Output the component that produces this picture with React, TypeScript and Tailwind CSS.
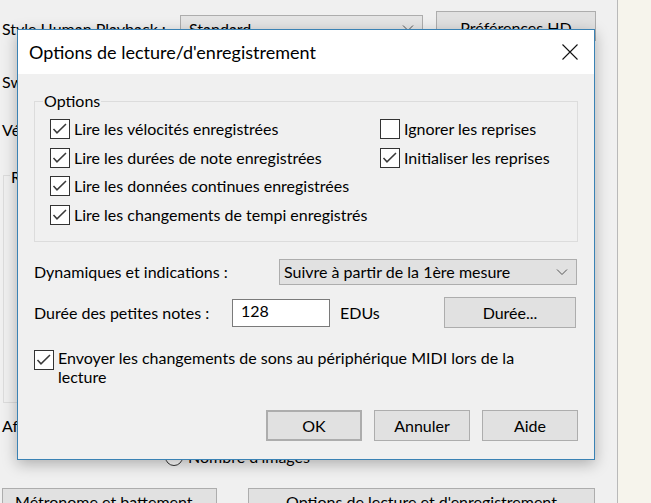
import React from "react";

const font = { fontFamily: "Lato, 'Segoe UI', 'Liberation Sans', sans-serif" };

function Check({ checked }: { checked: boolean }) {
  return (
    <span className="flex h-[20px] w-[20px] shrink-0 items-center justify-center border border-[#333333] bg-white">
      {checked && (
        <svg width="18" height="18" viewBox="0 0 18 18">
          <polyline points="2.5,9 6,12.8 15,4" fill="none" stroke="#3a3a3a" strokeWidth="1.5" />
        </svg>
      )}
    </span>
  );
}

function CheckRow({ checked, label }: { checked: boolean; label: string }) {
  return (
    <div className="flex h-[28.5px] items-center gap-[4px]">
      <Check checked={checked} />
      <span>{label}</span>
    </div>
  );
}

function Chevron() {
  return (
    <svg width="12" height="8" viewBox="0 0 12 8">
      <polyline points="1,1.5 6,6.5 11,1.5" fill="none" stroke="#555" strokeWidth="1" />
    </svg>
  );
}

function Btn({ label, className = "" }: { label: string; className?: string }) {
  return (
    <div
      className={`flex h-[31px] w-[96px] items-center justify-center border border-[#adadad] bg-[#e1e1e1] text-black ${className}`}
    >
      {label}
    </div>
  );
}

export default function App() {
  return (
    <div className="relative flex h-[503px] w-[651px] overflow-hidden text-[16px] text-black" style={font}>
      {/* background window */}
      <div className="relative flex h-full w-[618px] shrink-0 flex-col overflow-hidden border-r border-[#b9b9b9] bg-[#f0f0f0] pl-[2px]">
        <div className="mt-[11px] flex h-[30px] shrink-0 items-center">
          <span className="mt-[6px] w-[178px] leading-[20px]">Style Human Playback :</span>
          <div className="mt-[4px] flex h-[26px] w-[243px] items-center justify-between border border-[#adadad] bg-[#e5e5e5] pl-[8px] pr-[8px]">
            <span className="mt-[2px]">Standard</span>
            <Chevron />
          </div>
          <div className="ml-[13px] flex h-[30px] w-[160px] items-center justify-center border border-[#adadad] bg-[#e1e1e1] pt-[4px]">
            Préférences HD
          </div>
        </div>
        <div className="mt-[31px] shrink-0 leading-[20px]">Swing :</div>
        <div className="mt-[28px] shrink-0 leading-[20px]">Vélocité :</div>
        <div className="ml-[1px] mt-[35px] h-[228px] w-[560px] shrink-0 border border-[#dcdcdc]">
          <span className="relative -top-[11px] ml-[6px] bg-[#f0f0f0] px-[1px]">Réglages</span>
        </div>
        <div className="mt-[13px] shrink-0 leading-[20px]">Afficher :</div>
        <div className="ml-[163px] mt-[11px] flex h-[20px] shrink-0 items-center gap-[5px]">
          <span className="h-[18px] w-[18px] rounded-full border border-[#333] bg-white"></span>
          <span>Nombre d'images</span>
        </div>
        <div className="mt-[21px] flex shrink-0">
          <div className="flex h-[31px] w-[215px] items-start justify-center border border-[#adadad] bg-[#e1e1e1] pt-[1px]">
            Métronome et battement...
          </div>
          <div className="ml-[31px] flex h-[31px] w-[347px] items-start justify-center border border-[#adadad] bg-[#e1e1e1] pt-[1px]">
            Options de lecture et d'enregistrement
          </div>
        </div>
      </div>
      {/* desktop strip */}
      <div className="h-full flex-1 bg-[#f6f4ec]"></div>

      {/* dialog */}
      <div className="absolute left-[17px] top-[29px] flex h-[431px] w-[578px] flex-col border border-[#3a82b4] bg-[#f0f0f0] shadow-[0_4px_14px_rgba(0,0,0,0.28)]">
        <div className="flex h-[44px] shrink-0 items-center justify-between bg-white pl-[11px] pr-[16px]">
          <span className="text-[18px]">Options de lecture/d'enregistrement</span>
          <svg width="16" height="16" viewBox="0 0 16 16">
            <path d="M0.5 0.5 L15.5 15.5 M15.5 0.5 L0.5 15.5" stroke="#111" strokeWidth="1.1" />
          </svg>
        </div>
        <div className="flex flex-1 flex-col pl-[16px] pr-[16px]">
          <div className="relative mt-[27px] h-[141px] w-[544px] border border-[#dcdcdc]">
            <span className="absolute -top-[12px] left-[8px] bg-[#f0f0f0] px-[1px] leading-[22px]">Options</span>
            <div className="flex pl-[15px] pt-[13px]">
              <div className="w-[330px]">
                <CheckRow checked label="Lire les vélocités enregistrées" />
                <CheckRow checked label="Lire les durées de note enregistrées" />
                <CheckRow checked label="Lire les données continues enregistrées" />
                <CheckRow checked label="Lire les changements de tempi enregistrés" />
              </div>
              <div>
                <CheckRow checked={false} label="Ignorer les reprises" />
                <CheckRow checked label="Initialiser les reprises" />
              </div>
            </div>
          </div>
          <div className="mt-[17px] flex h-[26px] items-center">
            <span className="w-[245px]">Dynamiques et indications :</span>
            <div className="flex h-[26px] w-[298px] items-center justify-between border border-[#adadad] bg-[#e1e1e1] pl-[4px] pr-[8px]">
              <span>Suivre à partir de la 1ère mesure</span>
              <Chevron />
            </div>
          </div>
          <div className="mt-[12px] flex h-[31px] items-center">
            <span className="w-[198px]">Durée des petites notes :</span>
            <div className="flex h-[28px] w-[98px] items-center border border-[#7a7a7a] bg-white pl-[8px]">
              <span className="-mt-[3px]">128</span>
            </div>
            <span className="ml-[10px] w-[104px]">EDUs</span>
            <div className="flex h-[31px] w-[132px] items-center justify-center border border-[#adadad] bg-[#e1e1e1]">
              Durée...
            </div>
          </div>
          <div className="mt-[22px] flex items-start gap-[4px]">
            <span>
              <Check checked />
            </span>
            <span className="-mt-[2px] w-[480px] leading-[19px]">
              Envoyer les changements de sons au périphérique MIDI lors de la lecture
            </span>
          </div>
          <div className="mt-[24px] flex justify-end gap-[12px]">
            <Btn label="OK" className="border-2 border-[#0078d7]" />
            <Btn label="Annuler" />
            <Btn label="Aide" />
          </div>
        </div>
      </div>
    </div>
  );
}
